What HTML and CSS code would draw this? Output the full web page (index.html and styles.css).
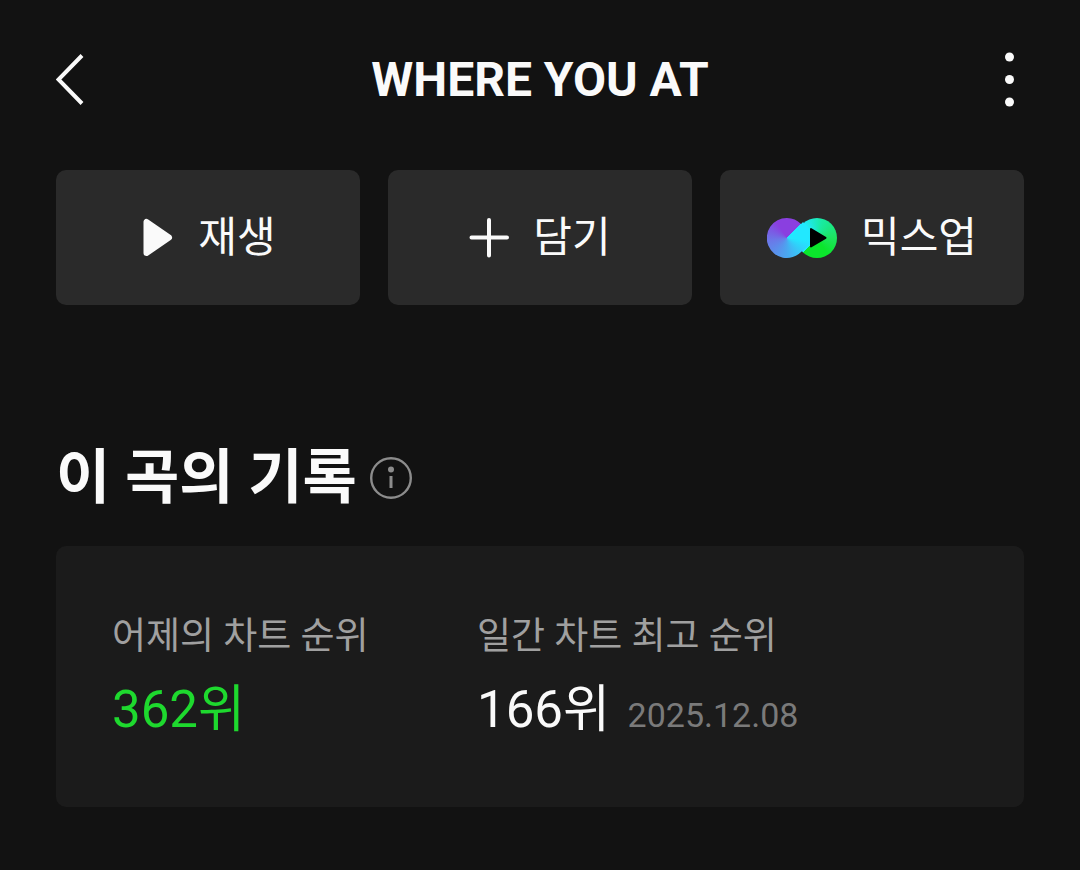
FILE: index.html
```html
<!DOCTYPE html>
<html lang="ko">
<head>
<meta charset="utf-8">
<meta name="viewport" content="width=device-width, initial-scale=1">
<title>WHERE YOU AT</title>
<link rel="stylesheet" href="styles.css">
</head>
<body>
<header class="topbar">
  <button class="icon-button" type="button" aria-label="뒤로">
    <svg width="32" height="56" viewBox="0 0 32 56" fill="none" stroke="#fafafa" stroke-width="4" stroke-linecap="butt" stroke-linejoin="miter"><path d="M26 3.500 2.500 27.500 26 51.500"/></svg>
  </button>
  <h1 class="title">WHERE YOU AT</h1>
  <button class="icon-button icon-button-end" type="button" aria-label="더보기">
    <svg width="30" height="56" viewBox="0 0 30 56" fill="#fafafa"><circle cx="15.500" cy="5" r="4.500"/><circle cx="15.500" cy="27.500" r="4.500"/><circle cx="15.500" cy="50" r="4.500"/></svg>
  </button>
</header>
<main class="content">
  <div class="actions">
    <button class="action" type="button">
      <svg width="34" height="40" viewBox="0 0 34 40"><path d="M6.500 4v31L29 19.500Z" fill="#fafafa" stroke="#fafafa" stroke-width="6" stroke-linejoin="round"/></svg>
      <span>재생</span>
    </button>
    <button class="action" type="button">
      <svg width="40" height="40" viewBox="0 0 40 40" fill="none" stroke="#fafafa" stroke-width="4" stroke-linecap="round"><path d="M20 2v35.500M2.500 19.500h35.500"/></svg>
      <span>담기</span>
    </button>
    <button class="action" type="button">
      <span class="mix" aria-hidden="true">
        <span class="mix-green"></span>
        <span class="mix-violet"></span>
        <svg class="mix-play" width="70" height="40" viewBox="0 0 70 40"><path d="M44 11v17.500L58.500 19.800Z" fill="#000" stroke="#000" stroke-width="2" stroke-linejoin="round"/></svg>
      </span>
      <span>믹스업</span>
    </button>
  </div>
  <section class="records">
    <div class="heading">
      <h2 class="heading-text">이 곡의 기록</h2>
      <button class="info" type="button" aria-label="안내">
        <svg width="42" height="42" viewBox="0 0 42 42"><circle cx="21" cy="21" r="19.800" fill="none" stroke="#8c8c8c" stroke-width="2.400"/><circle cx="21" cy="12.500" r="3" fill="#8c8c8c"/><path d="M21 19v12" stroke="#8c8c8c" stroke-width="3"/></svg>
      </button>
    </div>
    <dl class="card">
      <div class="record">
        <dt class="label">어제의 차트 순위</dt>
        <dd class="value value-current">362위</dd>
      </div>
      <div class="record">
        <dt class="label">일간 차트 최고 순위</dt>
        <dd class="value">166위 <time class="date" datetime="2025-12-08">2025.12.08</time></dd>
      </div>
    </dl>
  </section>
</main>
</body>
</html>
```

FILE: styles.css
```css
* {
  box-sizing: border-box;
}

body {
  margin: 0;
  background: #121212;
  color: #fafafa;
  font-family: Roboto, "Noto Sans CJK KR", sans-serif;
}

button {
  margin: 0;
  padding: 0;
  border: 0;
  background: none;
  color: inherit;
  font: inherit;
  cursor: pointer;
}

svg {
  display: block;
}

.topbar {
  display: grid;
  grid-template-columns: 56px 1fr 56px;
  align-items: center;
  padding: 40px 56px 34px;
}

.icon-button {
  display: flex;
  align-items: center;
  height: 80px;
}

.icon-button-end {
  justify-content: flex-end;
}

.title {
  margin: 0;
  text-align: center;
  font-size: 48px;
  font-weight: 700;
  line-height: 64px;
}

.content {
  padding: 16px 56px 63px;
}

.actions {
  display: grid;
  grid-template-columns: repeat(3, 1fr);
  gap: 28px;
}

.action {
  display: flex;
  align-items: center;
  justify-content: center;
  gap: 24px;
  padding: 36px 0 35px;
  border-radius: 10px;
  background: #2a2a2a;
  font-size: 42px;
  line-height: 64px;
}

.mix {
  position: relative;
  width: 70px;
  height: 40px;
}

.mix-green {
  position: absolute;
  top: 0;
  right: 0;
  width: 40px;
  height: 40px;
  border-radius: 50%;
  background: conic-gradient(from 225deg, #22e8ff 0 25%, #19eba2 42%, #1de560 62%, #0be62c 78%);
}

/* left disc joined to the diagonal band that crosses into the green disc */
.mix-violet {
  position: absolute;
  inset: 0;
  clip-path: path("M20 0A20 20 0 0 1 34 6L36 4 50 20 34 34A20 20 0 1 1 20 0Z");
  background: conic-gradient(from 45deg at 20px 20px, #22e8ff 0 14%, #4ba6f0 38%, #6b78e8 60%, #8a3fe0 78%);
}

.mix-play {
  position: absolute;
  top: 0;
  left: 0;
}

.records {
  padding-top: 129px;
}

.heading {
  display: flex;
  align-items: center;
  gap: 13px;
}

.heading-text {
  margin: 0;
  font-size: 59px;
  font-weight: 700;
  line-height: 88px;
}

.card {
  display: grid;
  grid-template-columns: 309px 1fr;
  column-gap: 56px;
  margin: 24px 0 0;
  padding: 63px 56px 56px;
  border-radius: 10px;
  background: #1b1b1b;
}

.label {
  color: #a0a0a0;
  font-size: 37px;
  line-height: 56px;
}

.value {
  margin: 9px 0 0;
  font-size: 51px;
  line-height: 72px;
}

.value-current {
  color: #1ed92e;
}

.date {
  margin-left: 5px;
  color: #7a7a7a;
  font-size: 34px;
}
```
